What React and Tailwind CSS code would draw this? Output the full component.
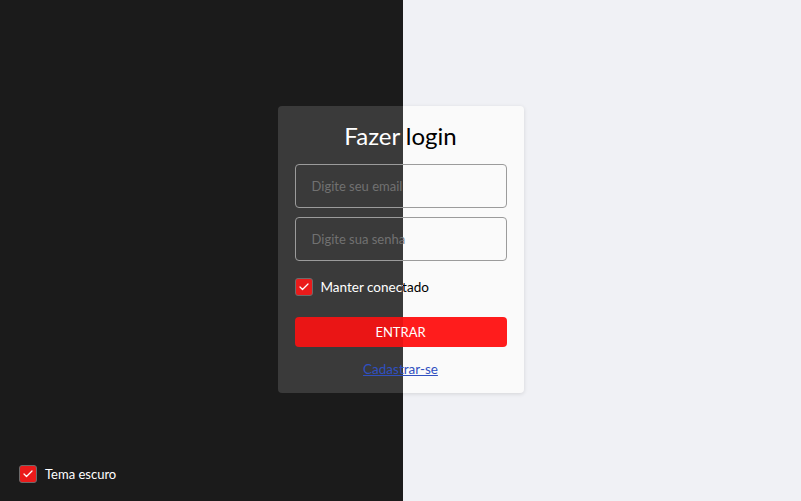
import { Check } from 'lucide-react';

function Checkbox({ dark }) {
  return (
    <span
      className={`flex h-[18px] w-[18px] shrink-0 items-center justify-center rounded-[3px] border bg-[#ea1b1b] ${
        dark ? 'border-[#6b6b6b]' : 'border-[#8a8a8a]'
      }`}
    >
      <Check className="h-3 w-3 text-white" strokeWidth={2.5} />
    </span>
  );
}

function Screen({ dark }) {
  const text = dark ? 'text-white' : 'text-black';
  const field = `h-[44px] w-full rounded-[4px] border border-[#9b9b9b] bg-transparent px-4 text-[13px] outline-none ${
    dark ? 'placeholder:text-[#717171]' : 'placeholder:text-[#7d7d7d]'
  }`;

  return (
    <div
      className={`relative flex h-screen w-screen items-center justify-center font-['Lato',sans-serif] ${
        dark ? 'bg-[#1b1b1b]' : 'bg-[#f0f1f5]'
      }`}
    >
      <div
        className={`mb-[2px] flex w-[246px] flex-col rounded-[4px] px-[17px] pt-[14px] pb-[15px] ${
          dark ? 'bg-[#3a3a3a]' : 'bg-[#fafafa] shadow-[0_1px_4px_rgba(0,0,0,0.12)]'
        }`}
      >
        <h1 className={`h-[32px] text-center text-[24px] leading-[32px] ${text}`}>Fazer login</h1>
        <input className={`mt-3 ${field}`} placeholder="Digite seu email" />
        <input className={`mt-[9px] ${field}`} placeholder="Digite sua senha" type="password" />
        <label className="mt-[17px] flex h-[18px] items-center gap-2">
          <Checkbox dark={dark} />
          <span className={`text-[13.5px] leading-[18px] whitespace-nowrap ${text}`}>Manter conectado</span>
        </label>
        <button
          className={`mt-[21px] h-[30px] w-full rounded-[4px] text-[13px] leading-[30px] text-white ${
            dark ? 'bg-[#ea1515]' : 'bg-[#ff1c1c]'
          }`}
        >
          ENTRAR
        </button>
        <a className="mt-[13px] h-[18px] text-center text-[13.5px] leading-[18px] text-[#3050c0] underline">
          Cadastrar-se
        </a>
      </div>

      <label className="absolute bottom-[18px] left-[19px] flex h-[18px] items-center gap-2">
        <Checkbox dark={dark} />
        <span className={`text-[13px] leading-[18px] ${text}`}>Tema escuro</span>
      </label>
    </div>
  );
}

export default function App() {
  return (
    <div className="relative h-screen w-screen overflow-hidden">
      <Screen dark={false} />
      <div className="absolute inset-y-0 left-0 w-[403px] overflow-hidden">
        <Screen dark />
      </div>
    </div>
  );
}
